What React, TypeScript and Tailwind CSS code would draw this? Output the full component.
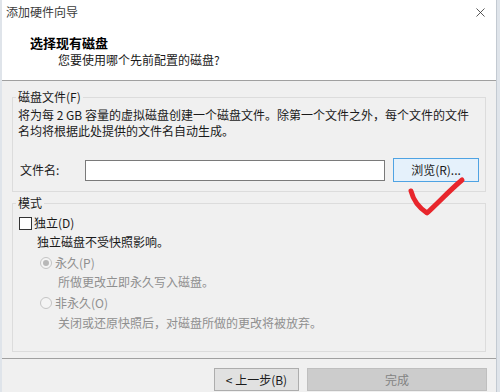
import React from 'react';
import { X } from 'lucide-react';

function Radio({ checked }: { checked?: boolean }) {
  return (
    <span className="w-[12px] h-[12px] rounded-full border border-[#c4c4c4] bg-[#f4f4f4] flex items-center justify-center shrink-0">
      {checked && <span className="w-[6px] h-[6px] rounded-full bg-[#b8b8b8]" />}
    </span>
  );
}

export default function App() {
  return (
    <div className="relative w-[500px] h-[392px] overflow-hidden bg-[#dfe4ea] font-['Noto_Sans_CJK_SC',sans-serif] text-[12px] leading-[16px] text-[#1a1a1a]">
      <div className="ml-[2px] w-[495px] h-full bg-[#f0f0f0] border-r border-[#c3cad2] flex flex-col">
        {/* header */}
        <div className="bg-white h-[80px] flex flex-col">
          <div className="flex items-center justify-between pt-[4px] pl-[4px] pr-[8px] h-[20px]">
            <span className="text-[#3c3c3c]">添加硬件向导</span>
            <X className="w-[15px] h-[15px] text-[#333]" strokeWidth={1.3} />
          </div>
          <div className="mt-[14px] pl-[28px] text-[13px] leading-[18px] font-bold text-black">选择现有磁盘</div>
          <div className="pl-[56px]">您要使用哪个先前配置的磁盘?</div>
        </div>
        <div className="h-px bg-[#a0a0a0]" />

        {/* disk file group */}
        <fieldset className="mt-[8px] mx-[10px] border border-[#dcdcdc] pb-[9px]">
          <legend className="ml-[3px] px-[2px]">磁盘文件(F)</legend>
          <p className="mt-[2px] pl-[5px]">
            将为每 2 GB 容量的虚拟磁盘创建一个磁盘文件。除第一个文件之外，每个文件的文件
            <br />
            名均将根据此处提供的文件名自动生成。
          </p>
          <div className="mt-[19px] flex items-center pl-[7px]">
            <span className="w-[65px]">文件名:</span>
            <div className="w-[300px] h-[21px] bg-white border border-[#7a7a7a]" />
            <button className="ml-[8px] w-[86px] h-[24px] bg-[#e5f1fb] border border-[#4fa3e3] text-[12px] leading-[16px]">
              浏览(R)...
            </button>
          </div>
        </fieldset>

        {/* mode group */}
        <fieldset className="mt-[3px] mx-[10px] border border-[#dcdcdc] pb-[20px]">
          <legend className="ml-[3px] px-[2px]">模式</legend>
          <div className="mt-[2px] h-[20px] flex items-center pl-[6px] gap-[2px]">
            <span className="w-[13px] h-[13px] border border-[#333] bg-white shrink-0" />
            <span>独立(D)</span>
          </div>
          <div className="mt-[1px] pl-[24px]">独立磁盘不受快照影响。</div>
          <div className="mt-[5px] flex items-center gap-[3px] pl-[27px] text-[#8f8f8f]">
            <Radio checked />
            <span>永久(P)</span>
          </div>
          <div className="mt-[3px] pl-[45px] text-[#8f8f8f]">所做更改立即永久写入磁盘。</div>
          <div className="mt-[5px] flex items-center gap-[3px] pl-[27px] text-[#8f8f8f]">
            <Radio />
            <span>非永久(O)</span>
          </div>
          <div className="mt-[4px] pl-[45px] text-[#8f8f8f]">关闭或还原快照后，对磁盘所做的更改将被放弃。</div>
        </fieldset>

        <div className="mt-[6px] h-px bg-[#a0a0a0]" />
        <div className="mt-[9px] flex justify-end gap-[8px] pr-[9px]">
          <button className="w-[85px] h-[23px] bg-[#e1e1e1] border border-[#adadad] text-[12px] leading-[16px]">
            &lt; 上一步(B)
          </button>
          <button className="w-[180px] h-[23px] bg-[#cccccc] border border-[#bfbfbf] text-[12px] leading-[16px] text-[#838383]">
            完成
          </button>
        </div>
      </div>

      {/* hand-drawn red check */}
      <svg className="absolute left-0 top-0 pointer-events-none" width="500" height="392">
        <path
          d="M411 191 C 413 199, 418 207, 427 213 C 437 204, 450 190, 462 180"
          fill="none"
          stroke="#e8262c"
          strokeWidth="5"
          strokeLinecap="round"
          strokeLinejoin="round"
        />
      </svg>
    </div>
  );
}
